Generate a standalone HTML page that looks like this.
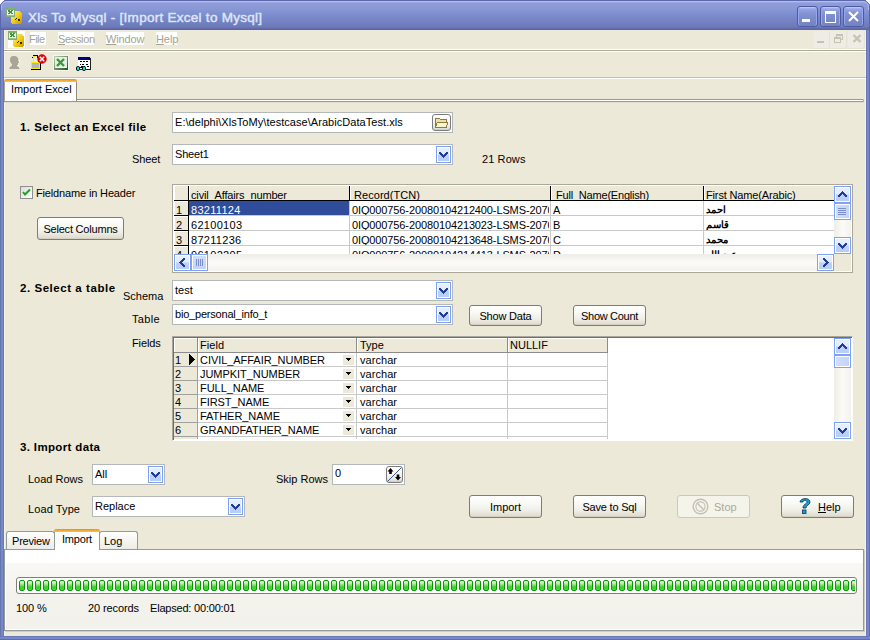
<!DOCTYPE html><html><head><meta charset="utf-8"><style>html,body{margin:0;padding:0;width:870px;height:640px;overflow:hidden;background:#fff;font-family:"Liberation Sans", sans-serif;}</style></head><body><div style="position:absolute;left:0px;top:0px;width:870px;height:640px;background:#6876B8;"></div>
<div style="position:absolute;left:0px;top:0px;width:870px;height:30px;background:linear-gradient(180deg,#5D68AC 0px,#5D68AC 1px,#BCC8F4 1px,#A4B2EA 2px,#8E9DD9 3px,#8A99D6 8px,#7F8ECE 14px,#7584C4 20px,#6D7AB8 27px,#6572B3 28px,#5A64A8 29px,#5A64A8 30px);"></div>
<svg style="position:absolute;left:0px;top:0px" width="10" height="10" viewBox="0 0 10 10" shape-rendering="crispEdges"><path d="M0 0 H7 A7 7 0 0 0 0 7 Z" fill="#fff"/><path d="M0.5 10 V7 A6.5 6.5 0 0 1 7 0.5 H10" fill="none" stroke="#5A66AA" stroke-width="1" shape-rendering="auto"/><path d="M1.5 10 V7 A5.5 5.5 0 0 1 7 1.5 H10" fill="none" stroke="#A9BCF2" stroke-width="1" shape-rendering="auto"/></svg>
<svg style="position:absolute;left:860px;top:0px" width="10" height="10" viewBox="0 0 10 10" shape-rendering="crispEdges"><path d="M10 0 H3 A7 7 0 0 1 10 7 Z" fill="#fff"/><path d="M9.5 10 V7 A6.5 6.5 0 0 0 3 0.5 H0" fill="none" stroke="#5A66AA" stroke-width="1" shape-rendering="auto"/><path d="M8.5 10 V7 A5.5 5.5 0 0 0 3 1.5 H0" fill="none" stroke="#A9BCF2" stroke-width="1" shape-rendering="auto"/></svg>
<div style="position:absolute;left:0px;top:6px;width:1px;height:24px;background:#5A66AA;"></div>
<div style="position:absolute;left:869px;top:6px;width:1px;height:24px;background:#5A66AA;"></div>
<div style="position:absolute;left:0px;top:30px;width:4px;height:610px;background:linear-gradient(90deg,#6575B2 0px,#6575B2 1px,#7888C7 1px,#7888C7 3px,#6878BA 3px);"></div>
<div style="position:absolute;left:866px;top:30px;width:4px;height:610px;background:linear-gradient(90deg,#6878BA 0px,#6878BA 1px,#7888C7 1px,#7888C7 3px,#5F6DAE 3px);"></div>
<div style="position:absolute;left:0px;top:636px;width:870px;height:4px;background:linear-gradient(180deg,#6878BA 0px,#6878BA 1px,#7888C7 1px,#7888C7 3px,#5F6DAE 3px);"></div>
<div style="position:absolute;left:4px;top:30px;width:862px;height:606px;background:#ECE9D8;"></div>
<div style="position:absolute;left:4px;top:30px;width:1px;height:606px;background:#F6F3E3;"></div>
<div style="position:absolute;left:865px;top:30px;width:1px;height:606px;background:#F6F3E3;"></div>
<svg style="position:absolute;left:6px;top:8px" width="18" height="18" viewBox="0 0 18 18" shape-rendering="crispEdges"><defs><linearGradient id="cy6" x1="0" x2="1" y1="0" y2="1"><stop offset="0" stop-color="#FFF590"/><stop offset="0.45" stop-color="#F6D41C"/><stop offset="1" stop-color="#C89400"/></linearGradient></defs><rect x="5" y="3" width="11" height="13" rx="3.5" fill="url(#cy6)"/><path d="M9 12 l2 -2 M13 11 v2" stroke="#303010" stroke-width="1.2"/><rect x="0.5" y="0.5" width="8" height="8" fill="#EEF6EA" stroke="#84AC74"/><rect x="1" y="1" width="7" height="1" fill="#7CB46C"/><rect x="1" y="6.8" width="7" height="1.2" fill="#9CC48C"/><path d="M2.2 2.3 L6.8 6 M6.8 2.3 L2.2 6" stroke="#3A9A3A" stroke-width="1.5"/></svg>
<div style="position:absolute;left:28px;top:10px;font-size:13.5px;line-height:16px;font-weight:400;color:#DCE6FA;letter-spacing:0.27px;white-space:pre;-webkit-text-stroke:0.45px #DCE6FA;">Xls To Mysql - [Import Excel to Mysql]</div>
<div style="position:absolute;left:797px;top:6px;width:19px;height:19px;border:1px solid #4F5AA0;border-radius:3px;background:linear-gradient(180deg,#C4CFF6 0px,#94A5E8 2px,#8494D4 6px,#7A89C8 12px,#7383C2 19px);box-shadow:inset 1px 0 0 #93A8F0,inset -1px 0 0 #93A8F0;"><div style="position:absolute;left:4px;top:12px;width:8px;height:3px;background:#fff"></div></div>
<div style="position:absolute;left:820px;top:6px;width:19px;height:19px;border:1px solid #4F5AA0;border-radius:3px;background:linear-gradient(180deg,#C4CFF6 0px,#94A5E8 2px,#8494D4 6px,#7A89C8 12px,#7383C2 19px);box-shadow:inset 1px 0 0 #93A8F0,inset -1px 0 0 #93A8F0;"><div style="position:absolute;left:4px;top:4px;width:9px;height:8px;border:1px solid #fff;border-top-width:3px"></div></div>
<div style="position:absolute;left:843px;top:6px;width:19px;height:19px;border:1px solid #4F5AA0;border-radius:3px;background:linear-gradient(180deg,#C4CFF6 0px,#94A5E8 2px,#8494D4 6px,#7A89C8 12px,#7383C2 19px);box-shadow:inset 1px 0 0 #93A8F0,inset -1px 0 0 #93A8F0;"><svg style="position:absolute;left:4px;top:4px" width="11" height="11"><path d="M1 1 L10 10 M10 1 L1 10" stroke="#fff" stroke-width="2"/></svg></div>
<div style="position:absolute;left:8px;top:31px;width:17px;height:17px;background:#fff;"></div>
<svg style="position:absolute;left:8px;top:31px" width="18" height="18" viewBox="0 0 18 18" shape-rendering="crispEdges"><defs><linearGradient id="cy8" x1="0" x2="1" y1="0" y2="1"><stop offset="0" stop-color="#FFF590"/><stop offset="0.45" stop-color="#F6D41C"/><stop offset="1" stop-color="#C89400"/></linearGradient></defs><rect x="5" y="3" width="11" height="13" rx="3.5" fill="url(#cy8)"/><path d="M9 12 l2 -2 M13 11 v2" stroke="#303010" stroke-width="1.2"/><rect x="0.5" y="0.5" width="8" height="8" fill="#EEF6EA" stroke="#84AC74"/><rect x="1" y="1" width="7" height="1" fill="#7CB46C"/><rect x="1" y="6.8" width="7" height="1.2" fill="#9CC48C"/><path d="M2.2 2.3 L6.8 6 M6.8 2.3 L2.2 6" stroke="#3A9A3A" stroke-width="1.5"/></svg>
<div style="position:absolute;left:30px;top:32px;width:16px;height:13px;background:#fff;"></div>
<div style="position:absolute;left:29px;top:33px;font-size:11px;line-height:13px;font-weight:400;color:#A5A290;letter-spacing:-0.55px;white-space:pre;">File</div>
<div style="position:absolute;left:58px;top:32px;width:36px;height:13px;background:#fff;"></div>
<div style="position:absolute;left:58px;top:33px;font-size:11px;line-height:13px;font-weight:400;color:#A5A290;letter-spacing:-0.35px;white-space:pre;"><u style="text-underline-offset:1px">S</u>ession</div>
<div style="position:absolute;left:106px;top:32px;width:38px;height:13px;background:#fff;"></div>
<div style="position:absolute;left:106px;top:33px;font-size:11px;line-height:13px;font-weight:400;color:#A5A290;letter-spacing:-0.15px;white-space:pre;"><u style="text-underline-offset:1px">W</u>indow</div>
<div style="position:absolute;left:156px;top:32px;width:21px;height:13px;background:#fff;"></div>
<div style="position:absolute;left:156px;top:33px;font-size:11px;line-height:13px;font-weight:400;color:#A5A290;letter-spacing:-0.1px;white-space:pre;"><u style="text-underline-offset:1px">H</u>elp</div>
<div style="position:absolute;left:813px;top:31px;width:17px;height:18px;background:#EEECE4;border-radius:2px;box-shadow:inset -1px -1px 0 #E6E3D5;"></div>
<div style="position:absolute;left:830px;top:31px;width:17px;height:18px;background:#EEECE4;border-radius:2px;box-shadow:inset -1px -1px 0 #E6E3D5;"></div>
<div style="position:absolute;left:848px;top:31px;width:17px;height:18px;background:#EEECE4;border-radius:2px;box-shadow:inset -1px -1px 0 #E6E3D5;"></div>
<div style="position:absolute;left:817px;top:41px;width:7px;height:2px;background:#C5C2B2;"></div>
<div style="position:absolute;left:836px;top:34px;width:7px;height:6px;border:1px solid #C5C2B2;border-top-width:2px;box-sizing:border-box;"></div>
<div style="position:absolute;left:834px;top:37px;width:7px;height:6px;border:1px solid #C5C2B2;border-top-width:2px;box-sizing:border-box;background:#EEECE4;"></div>
<svg style="position:absolute;left:852px;top:34px" width="10" height="9" viewBox="0 0 10 9" shape-rendering="crispEdges"><path d="M1.5 1 L8.5 8 M8.5 1 L1.5 8" stroke="#C5C2B2" stroke-width="2.2" shape-rendering="auto"/></svg>
<div style="position:absolute;left:4px;top:49px;width:862px;height:1px;background:#fff;"></div>
<div style="position:absolute;left:4px;top:50px;width:862px;height:1px;background:#ACA899;"></div>
<div style="position:absolute;left:4px;top:51px;width:862px;height:1px;background:#fff;"></div>
<svg style="position:absolute;left:8px;top:55px" width="14" height="15" viewBox="0 0 14 15" shape-rendering="crispEdges"><path d="M5.5 1 C3 1 2 2.5 2 5 C2 7 3 8.5 4 9 L4 10.5 L1.5 12.5 L1.5 14 L11.5 14 L11 12.5 L9 11 L9 10 L10.5 10 L10.5 8.5 L11.5 7.5 L10.5 6 C11 3 9 1 5.5 1Z" fill="#A9A698" shape-rendering="auto"/><path d="M11 4.5 L11.5 7.5 L10.5 8.5 L10.5 10 L9.5 11" fill="none" stroke="#fff" stroke-width="0.9" shape-rendering="auto"/></svg>
<svg style="position:absolute;left:30px;top:54px" width="17" height="18" viewBox="0 0 17 18" shape-rendering="crispEdges"><path d="M3 9 V3.5 Q3 1.5 5 1.5 H6.5 Q8 1.5 8 3.5 V9" fill="none" stroke="#000" stroke-width="1"/><path d="M3.5 9 V3 Q4 2 5 2" fill="none" stroke="#F0F000" stroke-width="1.2"/><rect x="1" y="8" width="10" height="8" fill="#000"/><rect x="1" y="8" width="9" height="7" fill="#F4F000"/><rect x="2" y="9" width="7" height="5" fill="#B4B4BC"/><circle cx="12" cy="5" r="4.4" fill="#E8000A" stroke="#A00000" stroke-width="0.5" shape-rendering="auto"/><path d="M9.8 2.8 L14.2 7.2 M14.2 2.8 L9.8 7.2" stroke="#fff" stroke-width="1.5" shape-rendering="auto"/></svg>
<svg style="position:absolute;left:53px;top:55px" width="16" height="16" viewBox="0 0 16 16" shape-rendering="crispEdges"><defs><linearGradient id="xg" x1="0" y1="0" x2="1" y2="1"><stop offset="0" stop-color="#B8D4B0"/><stop offset="1" stop-color="#264E26"/></linearGradient></defs><rect x="0" y="0" width="16" height="16" fill="#F6F8F0"/><rect x="1" y="1" width="14" height="14" fill="url(#xg)"/><rect x="2" y="2" width="12" height="11" fill="#E4F0E0"/><path d="M4 4 L11 11 M11 4 L4 11" stroke="#3A9A3A" stroke-width="2.4" shape-rendering="auto"/><rect x="3" y="12" width="10" height="1" fill="#F4FFF4"/></svg>
<svg style="position:absolute;left:76px;top:56px" width="16" height="16" viewBox="0 0 16 16" shape-rendering="crispEdges"><rect x="3" y="2" width="12" height="12" fill="#202020"/><rect x="2" y="1" width="12" height="12" fill="#fff"/><rect x="2" y="1" width="12" height="3" fill="#000080"/><path d="M4 5.5 h2 M7 5.5 h2 M10 5.5 h2 M4 8 h1 M6 8 h2 M10 8 h2 M5 10 h2 M8 10 h1 M11 10 h2" stroke="#000" stroke-width="1"/><path d="M2 11 h5" stroke="#000" stroke-width="1"/><rect x="0.5" y="10.5" width="3" height="4" rx="1.3" fill="#00E8F8" stroke="#000" stroke-width="1" shape-rendering="auto"/><rect x="6.5" y="10.5" width="3" height="4" rx="1.3" fill="#00E8F8" stroke="#000" stroke-width="1" shape-rendering="auto"/></svg>
<div style="position:absolute;left:4px;top:77px;width:862px;height:1px;background:#C5C2B2;"></div>
<div style="position:absolute;left:4px;top:78px;width:862px;height:1px;background:#fff;"></div>
<div style="position:absolute;left:70px;top:99px;width:794px;height:3px;background:#fff;border:1px solid #9D9A89;border-left:none;box-sizing:border-box;border-radius:0 2px 2px 0;"></div>
<div style="position:absolute;left:4px;top:101px;width:70px;height:1px;background:#9D9A89;"></div>
<div style="position:absolute;left:5px;top:100px;width:70px;height:1px;background:#fff;"></div>
<div style="position:absolute;left:4px;top:102px;width:860px;height:1px;background:#E2DFCE;"></div>
<div style="position:absolute;left:4px;top:79px;width:73px;height:22px;background:#fff;border-left:1px solid #A7A48F;border-right:1px solid #8F8C7B;box-sizing:border-box;border-radius:3px 3px 0 0;"></div>
<div style="position:absolute;left:4px;top:79px;width:73px;height:3px;background:linear-gradient(180deg,#E68B2C,#FFC73C);border-radius:3px 3px 0 0;"></div>
<div style="position:absolute;left:11px;top:83px;font-size:11px;line-height:13px;font-weight:400;color:#000;letter-spacing:-0.05px;white-space:pre;">Import Excel</div>
<div style="position:absolute;left:20px;top:121px;font-size:11.5px;line-height:13px;font-weight:700;color:#000;letter-spacing:0.45px;white-space:pre;">1. Select an Excel file</div>
<div style="position:absolute;left:132px;top:153px;font-size:11px;line-height:13px;font-weight:400;color:#000;letter-spacing:-0.1px;white-space:pre;">Sheet</div>
<div style="position:absolute;left:172px;top:112px;width:281px;height:21px;background:#fff;border:1px solid #B5B8B8;box-sizing:border-box;"></div>
<div style="position:absolute;left:175px;top:116px;font-size:11px;line-height:13px;font-weight:400;color:#000;letter-spacing:0.05px;white-space:pre;">E:\delphi\XlsToMy\testcase\ArabicDataTest.xls</div>
<div style="position:absolute;left:432px;top:114px;width:19px;height:17px;border:1px solid #7C7C7C;border-radius:3px;box-sizing:border-box;background:linear-gradient(180deg,#FFFFFF 0%,#F9F9F5 35%,#EEEDE6 70%,#DCD8CB 100%);box-shadow:inset 0 -1px 0 #D6D0C2;"></div>
<svg style="position:absolute;left:434px;top:116px" width="15" height="13" viewBox="0 0 15 13" shape-rendering="crispEdges"><path d="M1.5 2.5 h4 l1 1 h6 v8 h-11z" fill="#EEE2A8" stroke="#8C7A40" stroke-width="1"/><path d="M1.5 11.5 l2 -5.5 h10.5 l-2 5.5z" fill="#FAF4D0" stroke="#8C7A40" stroke-width="1"/></svg>
<div style="position:absolute;left:172px;top:144px;width:281px;height:21px;background:#fff;border:1px solid #B5B8B8;box-sizing:border-box;"></div>
<div style="position:absolute;left:436px;top:146px;width:15px;height:17px;border:1px solid #7BA2F6;box-sizing:border-box;background:linear-gradient(180deg,#FFFFFF 0px,#FFFFFF 1px,#E9F0FD 1px,#E2EAFC 7px,#BDD0F9 8px,#BACDF8 14px,#FFFFFF 14px);box-shadow:inset 1px 0 0 #fff,inset -1px 0 0 #fff;"><svg style="position:absolute;left:2px;top:5px" width="9" height="6" shape-rendering="crispEdges"><rect x="0" y="0" width="2" height="1" fill="#1E3E9E"/><rect x="7" y="0" width="2" height="1" fill="#1E3E9E"/><rect x="0" y="1" width="3" height="1" fill="#1E3E9E"/><rect x="6" y="1" width="3" height="1" fill="#1E3E9E"/><rect x="1" y="2" width="3" height="1" fill="#1E3E9E"/><rect x="5" y="2" width="3" height="1" fill="#1E3E9E"/><rect x="2" y="3" width="5" height="1" fill="#1E3E9E"/><rect x="3" y="4" width="3" height="1" fill="#1E3E9E"/><rect x="4" y="5" width="1" height="1" fill="#1E3E9E"/></svg></div>
<div style="position:absolute;left:175px;top:148px;font-size:11px;line-height:13px;font-weight:400;color:#000;letter-spacing:-0.2px;white-space:pre;">Sheet1</div>
<div style="position:absolute;left:482px;top:153px;font-size:11px;line-height:13px;font-weight:400;color:#000;letter-spacing:0.1px;white-space:pre;">21 Rows</div>
<div style="position:absolute;left:20px;top:186px;width:13px;height:13px;background:linear-gradient(135deg,#DCDCD7,#fff);border:1px solid #8E8F8F;box-sizing:border-box;"></div>
<svg style="position:absolute;left:22px;top:188px" width="9" height="9" viewBox="0 0 9 9" shape-rendering="crispEdges"><path d="M1 4 L3 6.5 L8 1.5" fill="none" stroke="#21A121" stroke-width="2" shape-rendering="auto"/></svg>
<div style="position:absolute;left:36px;top:187px;font-size:11px;line-height:13px;font-weight:400;color:#000;letter-spacing:-0.15px;white-space:pre;">Fieldname in Header</div>
<div style="position:absolute;left:37px;top:217px;width:87px;height:23px;border:1px solid #7C7C7C;border-radius:3px;box-sizing:border-box;background:linear-gradient(180deg,#FFFFFF 0%,#F9F9F5 35%,#EEEDE6 70%,#DCD8CB 100%);box-shadow:inset 0 -1px 0 #D6D0C2;"></div>
<div style="position:absolute;left:37px;top:223px;width:87px;text-align:center;font-size:11px;line-height:13px;font-weight:400;color:#000;letter-spacing:-0.2px;white-space:pre;">Select Columns</div>
<div style="position:absolute;left:172px;top:184px;width:681px;height:89px;background:#fff;border:1px solid #ACA899;box-sizing:border-box;"></div>
<div style="position:absolute;left:174px;top:186px;width:660px;height:14px;background:#ECE9D8;"></div>
<div style="position:absolute;left:174px;top:200px;width:660px;height:1px;background:#000;"></div>
<div style="position:absolute;left:188px;top:186px;width:1px;height:15px;background:#000;"></div>
<div style="position:absolute;left:189px;top:186px;width:1px;height:14px;background:#fff;"></div>
<div style="position:absolute;left:349px;top:186px;width:1px;height:15px;background:#000;"></div>
<div style="position:absolute;left:350px;top:186px;width:1px;height:14px;background:#fff;"></div>
<div style="position:absolute;left:550px;top:186px;width:1px;height:15px;background:#000;"></div>
<div style="position:absolute;left:551px;top:186px;width:1px;height:14px;background:#fff;"></div>
<div style="position:absolute;left:703px;top:186px;width:1px;height:15px;background:#000;"></div>
<div style="position:absolute;left:704px;top:186px;width:1px;height:14px;background:#fff;"></div>
<div style="position:absolute;left:174px;top:186px;width:1px;height:14px;background:#fff;"></div>
<div style="position:absolute;left:188px;top:186px;width:1px;height:68px;background:#000;"></div>
<div style="position:absolute;left:191px;top:189px;font-size:11px;line-height:13px;font-weight:400;color:#000;letter-spacing:-0.15px;white-space:pre;">civil_Affairs_number</div>
<div style="position:absolute;left:354px;top:189px;font-size:11px;line-height:13px;font-weight:400;color:#000;letter-spacing:0.05px;white-space:pre;">Record(TCN)</div>
<div style="position:absolute;left:556px;top:189px;font-size:11px;line-height:13px;font-weight:400;color:#000;letter-spacing:-0.2px;white-space:pre;">Full_Name(English)</div>
<div style="position:absolute;left:706px;top:189px;font-size:11px;line-height:13px;font-weight:400;color:#000;letter-spacing:-0.15px;white-space:pre;">First Name(Arabic)</div>
<div style="position:absolute;left:174px;top:201px;width:14px;height:14px;background:#ECE9D8;box-shadow:inset 1px 1px 0 #fff;"></div>
<div style="position:absolute;left:174px;top:215px;width:14px;height:1px;background:#000;"></div>
<div style="position:absolute;left:189px;top:215px;width:645px;height:1px;background:#C9C9C9;"></div>
<div style="position:absolute;left:349px;top:201px;width:1px;height:15px;background:#C9C9C9;"></div>
<div style="position:absolute;left:550px;top:201px;width:1px;height:15px;background:#C9C9C9;"></div>
<div style="position:absolute;left:703px;top:201px;width:1px;height:15px;background:#C9C9C9;"></div>
<div style="position:absolute;left:189px;top:201px;width:160px;height:14px;background:#2F4D9A;"></div>
<div style="position:absolute;left:174px;top:216px;width:14px;height:14px;background:#ECE9D8;box-shadow:inset 1px 1px 0 #fff;"></div>
<div style="position:absolute;left:174px;top:230px;width:14px;height:1px;background:#000;"></div>
<div style="position:absolute;left:189px;top:230px;width:645px;height:1px;background:#C9C9C9;"></div>
<div style="position:absolute;left:349px;top:216px;width:1px;height:15px;background:#C9C9C9;"></div>
<div style="position:absolute;left:550px;top:216px;width:1px;height:15px;background:#C9C9C9;"></div>
<div style="position:absolute;left:703px;top:216px;width:1px;height:15px;background:#C9C9C9;"></div>
<div style="position:absolute;left:174px;top:231px;width:14px;height:14px;background:#ECE9D8;box-shadow:inset 1px 1px 0 #fff;"></div>
<div style="position:absolute;left:174px;top:245px;width:14px;height:1px;background:#000;"></div>
<div style="position:absolute;left:189px;top:245px;width:645px;height:1px;background:#C9C9C9;"></div>
<div style="position:absolute;left:349px;top:231px;width:1px;height:15px;background:#C9C9C9;"></div>
<div style="position:absolute;left:550px;top:231px;width:1px;height:15px;background:#C9C9C9;"></div>
<div style="position:absolute;left:703px;top:231px;width:1px;height:15px;background:#C9C9C9;"></div>
<div style="position:absolute;left:174px;top:246px;width:14px;height:14px;background:#ECE9D8;box-shadow:inset 1px 1px 0 #fff;"></div>
<div style="position:absolute;left:174px;top:260px;width:14px;height:1px;background:#000;"></div>
<div style="position:absolute;left:189px;top:260px;width:645px;height:1px;background:#C9C9C9;"></div>
<div style="position:absolute;left:349px;top:246px;width:1px;height:15px;background:#C9C9C9;"></div>
<div style="position:absolute;left:550px;top:246px;width:1px;height:15px;background:#C9C9C9;"></div>
<div style="position:absolute;left:703px;top:246px;width:1px;height:15px;background:#C9C9C9;"></div>
<div style="position:absolute;left:174px;top:201px;width:660px;height:53px;overflow:hidden;"><div style="position:absolute;left:0px;top:0px;width:14px;height:14px;overflow:hidden;"><div style="position:absolute;left:2px;top:3px;font-size:11px;line-height:13px;color:#000;letter-spacing:0px;white-space:pre;">1</div></div><div style="position:absolute;left:15px;top:0px;width:160px;height:14px;overflow:hidden;"><div style="position:absolute;left:2px;top:3px;font-size:11px;line-height:13px;color:#fff;letter-spacing:0.3px;white-space:pre;">83211124</div></div><div style="position:absolute;left:176px;top:0px;width:199px;height:14px;overflow:hidden;"><div style="position:absolute;left:2px;top:3px;font-size:11px;line-height:13px;color:#000;letter-spacing:-0.12px;white-space:pre;">0IQ000756-20080104212400-LSMS-2070</div></div><div style="position:absolute;left:377px;top:0px;width:152px;height:14px;overflow:hidden;"><div style="position:absolute;left:2px;top:3px;font-size:11px;line-height:13px;color:#000;letter-spacing:0px;white-space:pre;">A</div></div><div style="position:absolute;left:530px;top:0px;width:130px;height:14px;overflow:hidden;"><div style="position:absolute;left:2px;top:3px;font-size:10px;line-height:12px;color:#000;letter-spacing:0px;white-space:pre;font-weight:700;direction:rtl;unicode-bidi:bidi-override;">احمد</div></div><div style="position:absolute;left:0px;top:15px;width:14px;height:14px;overflow:hidden;"><div style="position:absolute;left:2px;top:3px;font-size:11px;line-height:13px;color:#000;letter-spacing:0px;white-space:pre;">2</div></div><div style="position:absolute;left:15px;top:15px;width:160px;height:14px;overflow:hidden;"><div style="position:absolute;left:2px;top:3px;font-size:11px;line-height:13px;color:#000;letter-spacing:0.3px;white-space:pre;">62100103</div></div><div style="position:absolute;left:176px;top:15px;width:199px;height:14px;overflow:hidden;"><div style="position:absolute;left:2px;top:3px;font-size:11px;line-height:13px;color:#000;letter-spacing:-0.12px;white-space:pre;">0IQ000756-20080104213023-LSMS-2070</div></div><div style="position:absolute;left:377px;top:15px;width:152px;height:14px;overflow:hidden;"><div style="position:absolute;left:2px;top:3px;font-size:11px;line-height:13px;color:#000;letter-spacing:0px;white-space:pre;">B</div></div><div style="position:absolute;left:530px;top:15px;width:130px;height:14px;overflow:hidden;"><div style="position:absolute;left:2px;top:3px;font-size:10px;line-height:12px;color:#000;letter-spacing:0px;white-space:pre;font-weight:700;direction:rtl;unicode-bidi:bidi-override;">قاسم</div></div><div style="position:absolute;left:0px;top:30px;width:14px;height:14px;overflow:hidden;"><div style="position:absolute;left:2px;top:3px;font-size:11px;line-height:13px;color:#000;letter-spacing:0px;white-space:pre;">3</div></div><div style="position:absolute;left:15px;top:30px;width:160px;height:14px;overflow:hidden;"><div style="position:absolute;left:2px;top:3px;font-size:11px;line-height:13px;color:#000;letter-spacing:0.3px;white-space:pre;">87211236</div></div><div style="position:absolute;left:176px;top:30px;width:199px;height:14px;overflow:hidden;"><div style="position:absolute;left:2px;top:3px;font-size:11px;line-height:13px;color:#000;letter-spacing:-0.12px;white-space:pre;">0IQ000756-20080104213648-LSMS-2070</div></div><div style="position:absolute;left:377px;top:30px;width:152px;height:14px;overflow:hidden;"><div style="position:absolute;left:2px;top:3px;font-size:11px;line-height:13px;color:#000;letter-spacing:0px;white-space:pre;">C</div></div><div style="position:absolute;left:530px;top:30px;width:130px;height:14px;overflow:hidden;"><div style="position:absolute;left:2px;top:3px;font-size:10px;line-height:12px;color:#000;letter-spacing:0px;white-space:pre;font-weight:700;direction:rtl;unicode-bidi:bidi-override;">محمد</div></div><div style="position:absolute;left:0px;top:45px;width:14px;height:14px;overflow:hidden;"><div style="position:absolute;left:2px;top:3px;font-size:11px;line-height:13px;color:#000;letter-spacing:0px;white-space:pre;">4</div></div><div style="position:absolute;left:15px;top:45px;width:160px;height:14px;overflow:hidden;"><div style="position:absolute;left:2px;top:3px;font-size:11px;line-height:13px;color:#000;letter-spacing:0.3px;white-space:pre;">96102205</div></div><div style="position:absolute;left:176px;top:45px;width:199px;height:14px;overflow:hidden;"><div style="position:absolute;left:2px;top:3px;font-size:11px;line-height:13px;color:#000;letter-spacing:-0.12px;white-space:pre;">0IQ000756-20080104214413-LSMS-2070</div></div><div style="position:absolute;left:377px;top:45px;width:152px;height:14px;overflow:hidden;"><div style="position:absolute;left:2px;top:3px;font-size:11px;line-height:13px;color:#000;letter-spacing:0px;white-space:pre;">D</div></div><div style="position:absolute;left:530px;top:45px;width:130px;height:14px;overflow:hidden;"><div style="position:absolute;left:2px;top:3px;font-size:10px;line-height:12px;color:#000;letter-spacing:0px;white-space:pre;font-weight:700;direction:rtl;unicode-bidi:bidi-override;">عبد الله</div></div></div>
<div style="position:absolute;left:834px;top:186px;width:17px;height:68px;background:linear-gradient(90deg,#EEEDE6,#FBFBF8 50%,#F3F2EC);"></div>
<div style="position:absolute;left:834px;top:186px;width:17px;height:17px;border:1px solid #7BA2F6;box-sizing:border-box;background:linear-gradient(180deg,#FFFFFF 0px,#FFFFFF 1px,#E9F0FD 1px,#E2EAFC 7px,#BDD0F9 8px,#BACDF8 14px,#FFFFFF 14px);box-shadow:inset 1px 0 0 #fff,inset -1px 0 0 #fff;"></div>
<svg style="position:absolute;left:838px;top:191px" width="9" height="6" viewBox="0 0 9 6" shape-rendering="crispEdges"><rect x="0" y="5" width="2" height="1" fill="#1E3E9E"/><rect x="7" y="5" width="2" height="1" fill="#1E3E9E"/><rect x="0" y="4" width="3" height="1" fill="#1E3E9E"/><rect x="6" y="4" width="3" height="1" fill="#1E3E9E"/><rect x="1" y="3" width="3" height="1" fill="#1E3E9E"/><rect x="5" y="3" width="3" height="1" fill="#1E3E9E"/><rect x="2" y="2" width="5" height="1" fill="#1E3E9E"/><rect x="3" y="1" width="3" height="1" fill="#1E3E9E"/><rect x="4" y="0" width="1" height="1" fill="#1E3E9E"/></svg>
<div style="position:absolute;left:834px;top:203px;width:17px;height:17px;border:1px solid #7BA2F6;box-sizing:border-box;background:linear-gradient(90deg,#D0DDFC,#C2D3FA);box-shadow:inset 1px 1px 0 #fff,inset -1px -1px 0 #fff;"></div>
<svg style="position:absolute;left:838px;top:208px" width="8" height="7" viewBox="0 0 8 7" shape-rendering="crispEdges"><path d="M0 0.5h8M0 2.5h8M0 4.5h8M0 6.5h8" stroke="#7C8FCC" stroke-width="1"/></svg>
<div style="position:absolute;left:834px;top:237px;width:17px;height:17px;border:1px solid #7BA2F6;box-sizing:border-box;background:linear-gradient(180deg,#FFFFFF 0px,#FFFFFF 1px,#E9F0FD 1px,#E2EAFC 7px,#BDD0F9 8px,#BACDF8 14px,#FFFFFF 14px);box-shadow:inset 1px 0 0 #fff,inset -1px 0 0 #fff;"></div>
<svg style="position:absolute;left:838px;top:243px" width="9" height="6" viewBox="0 0 9 6" shape-rendering="crispEdges"><rect x="0" y="0" width="2" height="1" fill="#1E3E9E"/><rect x="7" y="0" width="2" height="1" fill="#1E3E9E"/><rect x="0" y="1" width="3" height="1" fill="#1E3E9E"/><rect x="6" y="1" width="3" height="1" fill="#1E3E9E"/><rect x="1" y="2" width="3" height="1" fill="#1E3E9E"/><rect x="5" y="2" width="3" height="1" fill="#1E3E9E"/><rect x="2" y="3" width="5" height="1" fill="#1E3E9E"/><rect x="3" y="4" width="3" height="1" fill="#1E3E9E"/><rect x="4" y="5" width="1" height="1" fill="#1E3E9E"/></svg>
<div style="position:absolute;left:174px;top:254px;width:660px;height:17px;background:linear-gradient(180deg,#EEEDE6,#FBFBF8 50%,#F3F2EC);"></div>
<div style="position:absolute;left:174px;top:254px;width:17px;height:17px;border:1px solid #7BA2F6;box-sizing:border-box;background:linear-gradient(180deg,#FFFFFF 0px,#FFFFFF 1px,#E9F0FD 1px,#E2EAFC 7px,#BDD0F9 8px,#BACDF8 14px,#FFFFFF 14px);box-shadow:inset 1px 0 0 #fff,inset -1px 0 0 #fff;"></div>
<svg style="position:absolute;left:179px;top:258px" width="6" height="9" viewBox="0 0 6 9" shape-rendering="crispEdges"><rect x="5" y="0" width="1" height="2" fill="#1E3E9E"/><rect x="5" y="7" width="1" height="2" fill="#1E3E9E"/><rect x="4" y="0" width="1" height="3" fill="#1E3E9E"/><rect x="4" y="6" width="1" height="3" fill="#1E3E9E"/><rect x="3" y="1" width="1" height="3" fill="#1E3E9E"/><rect x="3" y="5" width="1" height="3" fill="#1E3E9E"/><rect x="2" y="2" width="1" height="5" fill="#1E3E9E"/><rect x="1" y="3" width="1" height="3" fill="#1E3E9E"/><rect x="0" y="4" width="1" height="1" fill="#1E3E9E"/></svg>
<div style="position:absolute;left:191px;top:254px;width:17px;height:17px;border:1px solid #7BA2F6;box-sizing:border-box;background:linear-gradient(180deg,#D0DDFC,#C2D3FA);box-shadow:inset 1px 1px 0 #fff,inset -1px -1px 0 #fff;"></div>
<svg style="position:absolute;left:196px;top:259px" width="8" height="7" viewBox="0 0 8 7" shape-rendering="crispEdges"><path d="M0.5 0v7M2.5 0v7M4.5 0v7M6.5 0v7" stroke="#7C8FCC" stroke-width="1"/></svg>
<div style="position:absolute;left:817px;top:254px;width:17px;height:17px;border:1px solid #7BA2F6;box-sizing:border-box;background:linear-gradient(180deg,#FFFFFF 0px,#FFFFFF 1px,#E9F0FD 1px,#E2EAFC 7px,#BDD0F9 8px,#BACDF8 14px,#FFFFFF 14px);box-shadow:inset 1px 0 0 #fff,inset -1px 0 0 #fff;"></div>
<svg style="position:absolute;left:823px;top:258px" width="6" height="9" viewBox="0 0 6 9" shape-rendering="crispEdges"><rect x="0" y="0" width="1" height="2" fill="#1E3E9E"/><rect x="0" y="7" width="1" height="2" fill="#1E3E9E"/><rect x="1" y="0" width="1" height="3" fill="#1E3E9E"/><rect x="1" y="6" width="1" height="3" fill="#1E3E9E"/><rect x="2" y="1" width="1" height="3" fill="#1E3E9E"/><rect x="2" y="5" width="1" height="3" fill="#1E3E9E"/><rect x="3" y="2" width="1" height="5" fill="#1E3E9E"/><rect x="4" y="3" width="1" height="3" fill="#1E3E9E"/><rect x="5" y="4" width="1" height="1" fill="#1E3E9E"/></svg>
<div style="position:absolute;left:834px;top:254px;width:17px;height:17px;background:#ECE9D8;"></div>
<div style="position:absolute;left:20px;top:282px;font-size:11.5px;line-height:13px;font-weight:700;color:#000;letter-spacing:0.55px;white-space:pre;">2. Select a table</div>
<div style="position:absolute;left:123px;top:290px;font-size:11px;line-height:13px;font-weight:400;color:#000;letter-spacing:0px;white-space:pre;">Schema</div>
<div style="position:absolute;left:132px;top:313px;font-size:11px;line-height:13px;font-weight:400;color:#000;letter-spacing:0.3px;white-space:pre;">Table</div>
<div style="position:absolute;left:132px;top:337px;font-size:11px;line-height:13px;font-weight:400;color:#000;letter-spacing:-0.1px;white-space:pre;">Fields</div>
<div style="position:absolute;left:172px;top:280px;width:281px;height:21px;background:#fff;border:1px solid #B5B8B8;box-sizing:border-box;"></div>
<div style="position:absolute;left:436px;top:282px;width:15px;height:17px;border:1px solid #7BA2F6;box-sizing:border-box;background:linear-gradient(180deg,#FFFFFF 0px,#FFFFFF 1px,#E9F0FD 1px,#E2EAFC 7px,#BDD0F9 8px,#BACDF8 14px,#FFFFFF 14px);box-shadow:inset 1px 0 0 #fff,inset -1px 0 0 #fff;"><svg style="position:absolute;left:2px;top:5px" width="9" height="6" shape-rendering="crispEdges"><rect x="0" y="0" width="2" height="1" fill="#1E3E9E"/><rect x="7" y="0" width="2" height="1" fill="#1E3E9E"/><rect x="0" y="1" width="3" height="1" fill="#1E3E9E"/><rect x="6" y="1" width="3" height="1" fill="#1E3E9E"/><rect x="1" y="2" width="3" height="1" fill="#1E3E9E"/><rect x="5" y="2" width="3" height="1" fill="#1E3E9E"/><rect x="2" y="3" width="5" height="1" fill="#1E3E9E"/><rect x="3" y="4" width="3" height="1" fill="#1E3E9E"/><rect x="4" y="5" width="1" height="1" fill="#1E3E9E"/></svg></div>
<div style="position:absolute;left:175px;top:284px;font-size:11px;line-height:13px;font-weight:400;color:#000;letter-spacing:0px;white-space:pre;">test</div>
<div style="position:absolute;left:172px;top:304px;width:281px;height:21px;background:#fff;border:1px solid #B5B8B8;box-sizing:border-box;"></div>
<div style="position:absolute;left:436px;top:306px;width:15px;height:17px;border:1px solid #7BA2F6;box-sizing:border-box;background:linear-gradient(180deg,#FFFFFF 0px,#FFFFFF 1px,#E9F0FD 1px,#E2EAFC 7px,#BDD0F9 8px,#BACDF8 14px,#FFFFFF 14px);box-shadow:inset 1px 0 0 #fff,inset -1px 0 0 #fff;"><svg style="position:absolute;left:2px;top:5px" width="9" height="6" shape-rendering="crispEdges"><rect x="0" y="0" width="2" height="1" fill="#1E3E9E"/><rect x="7" y="0" width="2" height="1" fill="#1E3E9E"/><rect x="0" y="1" width="3" height="1" fill="#1E3E9E"/><rect x="6" y="1" width="3" height="1" fill="#1E3E9E"/><rect x="1" y="2" width="3" height="1" fill="#1E3E9E"/><rect x="5" y="2" width="3" height="1" fill="#1E3E9E"/><rect x="2" y="3" width="5" height="1" fill="#1E3E9E"/><rect x="3" y="4" width="3" height="1" fill="#1E3E9E"/><rect x="4" y="5" width="1" height="1" fill="#1E3E9E"/></svg></div>
<div style="position:absolute;left:175px;top:308px;font-size:11px;line-height:13px;font-weight:400;color:#000;letter-spacing:-0.2px;white-space:pre;">bio_personal_info_t</div>
<div style="position:absolute;left:469px;top:305px;width:73px;height:21px;border:1px solid #7C7C7C;border-radius:3px;box-sizing:border-box;background:linear-gradient(180deg,#FFFFFF 0%,#F9F9F5 35%,#EEEDE6 70%,#DCD8CB 100%);box-shadow:inset 0 -1px 0 #D6D0C2;"></div>
<div style="position:absolute;left:469px;top:310px;width:73px;text-align:center;font-size:11px;line-height:13px;font-weight:400;color:#000;letter-spacing:-0.2px;white-space:pre;">Show Data</div>
<div style="position:absolute;left:573px;top:305px;width:73px;height:21px;border:1px solid #7C7C7C;border-radius:3px;box-sizing:border-box;background:linear-gradient(180deg,#FFFFFF 0%,#F9F9F5 35%,#EEEDE6 70%,#DCD8CB 100%);box-shadow:inset 0 -1px 0 #D6D0C2;"></div>
<div style="position:absolute;left:573px;top:310px;width:73px;text-align:center;font-size:11px;line-height:13px;font-weight:400;color:#000;letter-spacing:-0.3px;white-space:pre;">Show Count</div>
<div style="position:absolute;left:172px;top:336px;width:681px;height:105px;background:#fff;border-left:1px solid #ACA899;border-top:1px solid #ACA899;border-right:1px solid #fff;border-bottom:1px solid #fff;box-sizing:border-box;"></div>
<div style="position:absolute;left:173px;top:337px;width:679px;height:103px;border-left:1px solid #716F64;border-top:1px solid #716F64;box-sizing:border-box;"></div>
<div style="position:absolute;left:174px;top:338px;width:434px;height:15px;background:#ECE9D8;"></div>
<div style="position:absolute;left:174px;top:338px;width:434px;height:1px;background:#fff;"></div>
<div style="position:absolute;left:197px;top:338px;width:1px;height:15px;background:#8C8C8C;"></div>
<div style="position:absolute;left:198px;top:338px;width:1px;height:14px;background:#fff;"></div>
<div style="position:absolute;left:356px;top:338px;width:1px;height:15px;background:#8C8C8C;"></div>
<div style="position:absolute;left:357px;top:338px;width:1px;height:14px;background:#fff;"></div>
<div style="position:absolute;left:507px;top:338px;width:1px;height:15px;background:#8C8C8C;"></div>
<div style="position:absolute;left:508px;top:338px;width:1px;height:14px;background:#fff;"></div>
<div style="position:absolute;left:607px;top:338px;width:1px;height:15px;background:#8C8C8C;"></div>
<div style="position:absolute;left:608px;top:338px;width:1px;height:14px;background:#fff;"></div>
<div style="position:absolute;left:174px;top:338px;width:1px;height:14px;background:#fff;"></div>
<div style="position:absolute;left:174px;top:352px;width:434px;height:1px;background:#8C8C8C;"></div>
<div style="position:absolute;left:200px;top:339px;font-size:11px;line-height:13px;font-weight:400;color:#000;letter-spacing:0.1px;white-space:pre;">Field</div>
<div style="position:absolute;left:360px;top:339px;font-size:11px;line-height:13px;font-weight:400;color:#000;letter-spacing:0px;white-space:pre;">Type</div>
<div style="position:absolute;left:510px;top:339px;font-size:11px;line-height:13px;font-weight:400;color:#000;letter-spacing:0px;white-space:pre;">NULLIF</div>
<div style="position:absolute;left:174px;top:353px;width:660px;height:86px;overflow:hidden;"><div style="position:absolute;left:0px;top:0px;width:23px;height:13px;background:#ECE9D8;"></div><div style="position:absolute;left:0px;top:13px;width:434px;height:1px;background:#C9C9C9;"></div><div style="position:absolute;left:0px;top:13px;width:23px;height:1px;background:#A0A0A0;"></div><div style="position:absolute;left:23px;top:0px;width:1px;height:14px;background:#A0A0A0;"></div><div style="position:absolute;left:182px;top:0px;width:1px;height:14px;background:#C9C9C9;"></div><div style="position:absolute;left:333px;top:0px;width:1px;height:14px;background:#C9C9C9;"></div><div style="position:absolute;left:433px;top:0px;width:1px;height:14px;background:#C9C9C9;"></div><div style="position:absolute;left:1px;top:0px;width:22px;height:13px;overflow:hidden;"><div style="position:absolute;left:0px;top:1px;font-size:11px;line-height:13px;color:#000;letter-spacing:0px;white-space:pre;line-height:13px;">1</div></div><div style="position:absolute;left:24px;top:0px;width:140px;height:13px;overflow:hidden;"><div style="position:absolute;left:2px;top:1px;font-size:11px;line-height:13px;color:#000;letter-spacing:-0.05px;white-space:pre;">CIVIL_AFFAIR_NUMBER</div></div><div style="position:absolute;left:169px;top:2px;width:11px;height:10px;background:#ECE9D8;"></div><svg style="position:absolute;left:172px;top:5px" width="5" height="3" shape-rendering="crispEdges"><path d="M0 0h5v1h-1v1h-1v1h-1v-1h-1v-1h-1z" fill="#000"/></svg><div style="position:absolute;left:183px;top:0px;width:150px;height:13px;overflow:hidden;"><div style="position:absolute;left:3px;top:1px;font-size:11px;line-height:13px;color:#000;letter-spacing:0.05px;white-space:pre;">varchar</div></div><div style="position:absolute;left:0px;top:14px;width:23px;height:13px;background:#ECE9D8;"></div><div style="position:absolute;left:0px;top:27px;width:434px;height:1px;background:#C9C9C9;"></div><div style="position:absolute;left:0px;top:27px;width:23px;height:1px;background:#A0A0A0;"></div><div style="position:absolute;left:23px;top:14px;width:1px;height:14px;background:#A0A0A0;"></div><div style="position:absolute;left:182px;top:14px;width:1px;height:14px;background:#C9C9C9;"></div><div style="position:absolute;left:333px;top:14px;width:1px;height:14px;background:#C9C9C9;"></div><div style="position:absolute;left:433px;top:14px;width:1px;height:14px;background:#C9C9C9;"></div><div style="position:absolute;left:1px;top:14px;width:22px;height:13px;overflow:hidden;"><div style="position:absolute;left:0px;top:1px;font-size:11px;line-height:13px;color:#000;letter-spacing:0px;white-space:pre;line-height:13px;">2</div></div><div style="position:absolute;left:24px;top:14px;width:140px;height:13px;overflow:hidden;"><div style="position:absolute;left:2px;top:1px;font-size:11px;line-height:13px;color:#000;letter-spacing:-0.05px;white-space:pre;">JUMPKIT_NUMBER</div></div><div style="position:absolute;left:169px;top:16px;width:11px;height:10px;background:#ECE9D8;"></div><svg style="position:absolute;left:172px;top:19px" width="5" height="3" shape-rendering="crispEdges"><path d="M0 0h5v1h-1v1h-1v1h-1v-1h-1v-1h-1z" fill="#000"/></svg><div style="position:absolute;left:183px;top:14px;width:150px;height:13px;overflow:hidden;"><div style="position:absolute;left:3px;top:1px;font-size:11px;line-height:13px;color:#000;letter-spacing:0.05px;white-space:pre;">varchar</div></div><div style="position:absolute;left:0px;top:28px;width:23px;height:13px;background:#ECE9D8;"></div><div style="position:absolute;left:0px;top:41px;width:434px;height:1px;background:#C9C9C9;"></div><div style="position:absolute;left:0px;top:41px;width:23px;height:1px;background:#A0A0A0;"></div><div style="position:absolute;left:23px;top:28px;width:1px;height:14px;background:#A0A0A0;"></div><div style="position:absolute;left:182px;top:28px;width:1px;height:14px;background:#C9C9C9;"></div><div style="position:absolute;left:333px;top:28px;width:1px;height:14px;background:#C9C9C9;"></div><div style="position:absolute;left:433px;top:28px;width:1px;height:14px;background:#C9C9C9;"></div><div style="position:absolute;left:1px;top:28px;width:22px;height:13px;overflow:hidden;"><div style="position:absolute;left:0px;top:1px;font-size:11px;line-height:13px;color:#000;letter-spacing:0px;white-space:pre;line-height:13px;">3</div></div><div style="position:absolute;left:24px;top:28px;width:140px;height:13px;overflow:hidden;"><div style="position:absolute;left:2px;top:1px;font-size:11px;line-height:13px;color:#000;letter-spacing:-0.05px;white-space:pre;">FULL_NAME</div></div><div style="position:absolute;left:169px;top:30px;width:11px;height:10px;background:#ECE9D8;"></div><svg style="position:absolute;left:172px;top:33px" width="5" height="3" shape-rendering="crispEdges"><path d="M0 0h5v1h-1v1h-1v1h-1v-1h-1v-1h-1z" fill="#000"/></svg><div style="position:absolute;left:183px;top:28px;width:150px;height:13px;overflow:hidden;"><div style="position:absolute;left:3px;top:1px;font-size:11px;line-height:13px;color:#000;letter-spacing:0.05px;white-space:pre;">varchar</div></div><div style="position:absolute;left:0px;top:42px;width:23px;height:13px;background:#ECE9D8;"></div><div style="position:absolute;left:0px;top:55px;width:434px;height:1px;background:#C9C9C9;"></div><div style="position:absolute;left:0px;top:55px;width:23px;height:1px;background:#A0A0A0;"></div><div style="position:absolute;left:23px;top:42px;width:1px;height:14px;background:#A0A0A0;"></div><div style="position:absolute;left:182px;top:42px;width:1px;height:14px;background:#C9C9C9;"></div><div style="position:absolute;left:333px;top:42px;width:1px;height:14px;background:#C9C9C9;"></div><div style="position:absolute;left:433px;top:42px;width:1px;height:14px;background:#C9C9C9;"></div><div style="position:absolute;left:1px;top:42px;width:22px;height:13px;overflow:hidden;"><div style="position:absolute;left:0px;top:1px;font-size:11px;line-height:13px;color:#000;letter-spacing:0px;white-space:pre;line-height:13px;">4</div></div><div style="position:absolute;left:24px;top:42px;width:140px;height:13px;overflow:hidden;"><div style="position:absolute;left:2px;top:1px;font-size:11px;line-height:13px;color:#000;letter-spacing:-0.05px;white-space:pre;">FIRST_NAME</div></div><div style="position:absolute;left:169px;top:44px;width:11px;height:10px;background:#ECE9D8;"></div><svg style="position:absolute;left:172px;top:47px" width="5" height="3" shape-rendering="crispEdges"><path d="M0 0h5v1h-1v1h-1v1h-1v-1h-1v-1h-1z" fill="#000"/></svg><div style="position:absolute;left:183px;top:42px;width:150px;height:13px;overflow:hidden;"><div style="position:absolute;left:3px;top:1px;font-size:11px;line-height:13px;color:#000;letter-spacing:0.05px;white-space:pre;">varchar</div></div><div style="position:absolute;left:0px;top:56px;width:23px;height:13px;background:#ECE9D8;"></div><div style="position:absolute;left:0px;top:69px;width:434px;height:1px;background:#C9C9C9;"></div><div style="position:absolute;left:0px;top:69px;width:23px;height:1px;background:#A0A0A0;"></div><div style="position:absolute;left:23px;top:56px;width:1px;height:14px;background:#A0A0A0;"></div><div style="position:absolute;left:182px;top:56px;width:1px;height:14px;background:#C9C9C9;"></div><div style="position:absolute;left:333px;top:56px;width:1px;height:14px;background:#C9C9C9;"></div><div style="position:absolute;left:433px;top:56px;width:1px;height:14px;background:#C9C9C9;"></div><div style="position:absolute;left:1px;top:56px;width:22px;height:13px;overflow:hidden;"><div style="position:absolute;left:0px;top:1px;font-size:11px;line-height:13px;color:#000;letter-spacing:0px;white-space:pre;line-height:13px;">5</div></div><div style="position:absolute;left:24px;top:56px;width:140px;height:13px;overflow:hidden;"><div style="position:absolute;left:2px;top:1px;font-size:11px;line-height:13px;color:#000;letter-spacing:-0.05px;white-space:pre;">FATHER_NAME</div></div><div style="position:absolute;left:169px;top:58px;width:11px;height:10px;background:#ECE9D8;"></div><svg style="position:absolute;left:172px;top:61px" width="5" height="3" shape-rendering="crispEdges"><path d="M0 0h5v1h-1v1h-1v1h-1v-1h-1v-1h-1z" fill="#000"/></svg><div style="position:absolute;left:183px;top:56px;width:150px;height:13px;overflow:hidden;"><div style="position:absolute;left:3px;top:1px;font-size:11px;line-height:13px;color:#000;letter-spacing:0.05px;white-space:pre;">varchar</div></div><div style="position:absolute;left:0px;top:70px;width:23px;height:13px;background:#ECE9D8;"></div><div style="position:absolute;left:0px;top:83px;width:434px;height:1px;background:#C9C9C9;"></div><div style="position:absolute;left:0px;top:83px;width:23px;height:1px;background:#A0A0A0;"></div><div style="position:absolute;left:23px;top:70px;width:1px;height:14px;background:#A0A0A0;"></div><div style="position:absolute;left:182px;top:70px;width:1px;height:14px;background:#C9C9C9;"></div><div style="position:absolute;left:333px;top:70px;width:1px;height:14px;background:#C9C9C9;"></div><div style="position:absolute;left:433px;top:70px;width:1px;height:14px;background:#C9C9C9;"></div><div style="position:absolute;left:1px;top:70px;width:22px;height:13px;overflow:hidden;"><div style="position:absolute;left:0px;top:1px;font-size:11px;line-height:13px;color:#000;letter-spacing:0px;white-space:pre;line-height:13px;">6</div></div><div style="position:absolute;left:24px;top:70px;width:140px;height:13px;overflow:hidden;"><div style="position:absolute;left:2px;top:1px;font-size:11px;line-height:13px;color:#000;letter-spacing:-0.05px;white-space:pre;">GRANDFATHER_NAME</div></div><div style="position:absolute;left:169px;top:72px;width:11px;height:10px;background:#ECE9D8;"></div><svg style="position:absolute;left:172px;top:75px" width="5" height="3" shape-rendering="crispEdges"><path d="M0 0h5v1h-1v1h-1v1h-1v-1h-1v-1h-1z" fill="#000"/></svg><div style="position:absolute;left:183px;top:70px;width:150px;height:13px;overflow:hidden;"><div style="position:absolute;left:3px;top:1px;font-size:11px;line-height:13px;color:#000;letter-spacing:0.05px;white-space:pre;">varchar</div></div><div style="position:absolute;left:0px;top:84px;width:23px;height:13px;background:#ECE9D8;"></div><div style="position:absolute;left:0px;top:97px;width:434px;height:1px;background:#C9C9C9;"></div><div style="position:absolute;left:0px;top:97px;width:23px;height:1px;background:#A0A0A0;"></div><div style="position:absolute;left:23px;top:84px;width:1px;height:14px;background:#A0A0A0;"></div><div style="position:absolute;left:182px;top:84px;width:1px;height:14px;background:#C9C9C9;"></div><div style="position:absolute;left:333px;top:84px;width:1px;height:14px;background:#C9C9C9;"></div><div style="position:absolute;left:433px;top:84px;width:1px;height:14px;background:#C9C9C9;"></div><div style="position:absolute;left:1px;top:84px;width:22px;height:13px;overflow:hidden;"><div style="position:absolute;left:0px;top:1px;font-size:11px;line-height:13px;color:#000;letter-spacing:0px;white-space:pre;line-height:13px;">7</div></div><div style="position:absolute;left:24px;top:84px;width:140px;height:13px;overflow:hidden;"><div style="position:absolute;left:2px;top:1px;font-size:11px;line-height:13px;color:#000;letter-spacing:-0.05px;white-space:pre;">MOTHER_NAME</div></div><div style="position:absolute;left:169px;top:86px;width:11px;height:10px;background:#ECE9D8;"></div><svg style="position:absolute;left:172px;top:89px" width="5" height="3" shape-rendering="crispEdges"><path d="M0 0h5v1h-1v1h-1v1h-1v-1h-1v-1h-1z" fill="#000"/></svg><div style="position:absolute;left:183px;top:84px;width:150px;height:13px;overflow:hidden;"><div style="position:absolute;left:3px;top:1px;font-size:11px;line-height:13px;color:#000;letter-spacing:0.05px;white-space:pre;">varchar</div></div><svg style="position:absolute;left:15px;top:1px" width="6" height="11" shape-rendering="crispEdges"><path d="M0 0h1v1h1v1h1v1h1v1h1v1h1v1h-1v1h-1v1h-1v1h-1v1h-1v1h-1z" fill="#000"/></svg></div>
<div style="position:absolute;left:834px;top:338px;width:17px;height:101px;background:linear-gradient(90deg,#EEEDE6,#FBFBF8 50%,#F3F2EC);"></div>
<div style="position:absolute;left:834px;top:338px;width:17px;height:17px;border:1px solid #7BA2F6;box-sizing:border-box;background:linear-gradient(180deg,#FFFFFF 0px,#FFFFFF 1px,#E9F0FD 1px,#E2EAFC 7px,#BDD0F9 8px,#BACDF8 14px,#FFFFFF 14px);box-shadow:inset 1px 0 0 #fff,inset -1px 0 0 #fff;"></div>
<svg style="position:absolute;left:838px;top:343px" width="9" height="6" viewBox="0 0 9 6" shape-rendering="crispEdges"><rect x="0" y="5" width="2" height="1" fill="#1E3E9E"/><rect x="7" y="5" width="2" height="1" fill="#1E3E9E"/><rect x="0" y="4" width="3" height="1" fill="#1E3E9E"/><rect x="6" y="4" width="3" height="1" fill="#1E3E9E"/><rect x="1" y="3" width="3" height="1" fill="#1E3E9E"/><rect x="5" y="3" width="3" height="1" fill="#1E3E9E"/><rect x="2" y="2" width="5" height="1" fill="#1E3E9E"/><rect x="3" y="1" width="3" height="1" fill="#1E3E9E"/><rect x="4" y="0" width="1" height="1" fill="#1E3E9E"/></svg>
<div style="position:absolute;left:834px;top:355px;width:17px;height:13px;border:1px solid #7BA2F6;box-sizing:border-box;background:linear-gradient(90deg,#D0DDFC,#C2D3FA);box-shadow:inset 1px 1px 0 #fff,inset -1px -1px 0 #fff;"></div>
<div style="position:absolute;left:834px;top:422px;width:17px;height:17px;border:1px solid #7BA2F6;box-sizing:border-box;background:linear-gradient(180deg,#FFFFFF 0px,#FFFFFF 1px,#E9F0FD 1px,#E2EAFC 7px,#BDD0F9 8px,#BACDF8 14px,#FFFFFF 14px);box-shadow:inset 1px 0 0 #fff,inset -1px 0 0 #fff;"></div>
<svg style="position:absolute;left:838px;top:428px" width="9" height="6" viewBox="0 0 9 6" shape-rendering="crispEdges"><rect x="0" y="0" width="2" height="1" fill="#1E3E9E"/><rect x="7" y="0" width="2" height="1" fill="#1E3E9E"/><rect x="0" y="1" width="3" height="1" fill="#1E3E9E"/><rect x="6" y="1" width="3" height="1" fill="#1E3E9E"/><rect x="1" y="2" width="3" height="1" fill="#1E3E9E"/><rect x="5" y="2" width="3" height="1" fill="#1E3E9E"/><rect x="2" y="3" width="5" height="1" fill="#1E3E9E"/><rect x="3" y="4" width="3" height="1" fill="#1E3E9E"/><rect x="4" y="5" width="1" height="1" fill="#1E3E9E"/></svg>
<div style="position:absolute;left:20px;top:441px;font-size:11.5px;line-height:13px;font-weight:700;color:#000;letter-spacing:0.35px;white-space:pre;">3. Import data</div>
<div style="position:absolute;left:28px;top:473px;font-size:11px;line-height:13px;font-weight:400;color:#000;letter-spacing:0px;white-space:pre;">Load Rows</div>
<div style="position:absolute;left:28px;top:503px;font-size:11px;line-height:13px;font-weight:400;color:#000;letter-spacing:0.1px;white-space:pre;">Load Type</div>
<div style="position:absolute;left:92px;top:464px;width:73px;height:21px;background:#fff;border:1px solid #B5B8B8;box-sizing:border-box;"></div>
<div style="position:absolute;left:148px;top:466px;width:15px;height:17px;border:1px solid #7BA2F6;box-sizing:border-box;background:linear-gradient(180deg,#FFFFFF 0px,#FFFFFF 1px,#E9F0FD 1px,#E2EAFC 7px,#BDD0F9 8px,#BACDF8 14px,#FFFFFF 14px);box-shadow:inset 1px 0 0 #fff,inset -1px 0 0 #fff;"><svg style="position:absolute;left:2px;top:5px" width="9" height="6" shape-rendering="crispEdges"><rect x="0" y="0" width="2" height="1" fill="#1E3E9E"/><rect x="7" y="0" width="2" height="1" fill="#1E3E9E"/><rect x="0" y="1" width="3" height="1" fill="#1E3E9E"/><rect x="6" y="1" width="3" height="1" fill="#1E3E9E"/><rect x="1" y="2" width="3" height="1" fill="#1E3E9E"/><rect x="5" y="2" width="3" height="1" fill="#1E3E9E"/><rect x="2" y="3" width="5" height="1" fill="#1E3E9E"/><rect x="3" y="4" width="3" height="1" fill="#1E3E9E"/><rect x="4" y="5" width="1" height="1" fill="#1E3E9E"/></svg></div>
<div style="position:absolute;left:95px;top:468px;font-size:11px;line-height:13px;font-weight:400;color:#000;letter-spacing:0px;white-space:pre;">All</div>
<div style="position:absolute;left:92px;top:496px;width:153px;height:21px;background:#fff;border:1px solid #B5B8B8;box-sizing:border-box;"></div>
<div style="position:absolute;left:228px;top:498px;width:15px;height:17px;border:1px solid #7BA2F6;box-sizing:border-box;background:linear-gradient(180deg,#FFFFFF 0px,#FFFFFF 1px,#E9F0FD 1px,#E2EAFC 7px,#BDD0F9 8px,#BACDF8 14px,#FFFFFF 14px);box-shadow:inset 1px 0 0 #fff,inset -1px 0 0 #fff;"><svg style="position:absolute;left:2px;top:5px" width="9" height="6" shape-rendering="crispEdges"><rect x="0" y="0" width="2" height="1" fill="#1E3E9E"/><rect x="7" y="0" width="2" height="1" fill="#1E3E9E"/><rect x="0" y="1" width="3" height="1" fill="#1E3E9E"/><rect x="6" y="1" width="3" height="1" fill="#1E3E9E"/><rect x="1" y="2" width="3" height="1" fill="#1E3E9E"/><rect x="5" y="2" width="3" height="1" fill="#1E3E9E"/><rect x="2" y="3" width="5" height="1" fill="#1E3E9E"/><rect x="3" y="4" width="3" height="1" fill="#1E3E9E"/><rect x="4" y="5" width="1" height="1" fill="#1E3E9E"/></svg></div>
<div style="position:absolute;left:95px;top:500px;font-size:11px;line-height:13px;font-weight:400;color:#000;letter-spacing:0px;white-space:pre;">Replace</div>
<div style="position:absolute;left:276px;top:473px;font-size:11px;line-height:13px;font-weight:400;color:#000;letter-spacing:0px;white-space:pre;">Skip Rows</div>
<div style="position:absolute;left:332px;top:464px;width:73px;height:21px;background:#fff;border:1px solid #B5B8B8;box-sizing:border-box;"></div>
<div style="position:absolute;left:335px;top:467px;font-size:11px;line-height:13px;font-weight:400;color:#000;letter-spacing:0px;white-space:pre;">0</div>
<div style="position:absolute;left:386px;top:466px;width:17px;height:17px;border:1px solid #7C7C7C;border-radius:3px;box-sizing:border-box;background:linear-gradient(180deg,#FFFFFF 0%,#F9F9F5 35%,#EEEDE6 70%,#DCD8CB 100%);box-shadow:inset 0 -1px 0 #D6D0C2;"></div>
<svg style="position:absolute;left:387px;top:467px" width="15" height="15" viewBox="0 0 15 15" shape-rendering="crispEdges"><path d="M0.5 14.5 L14.5 0.5" stroke="#3A5AA0" stroke-width="1" shape-rendering="auto"/><path d="M3.5 1 L6.5 4.5 H4.8 V7 H2.2 V4.5 H0.5Z" fill="#000" shape-rendering="auto"/><path d="M11 13.5 L14 10 H12.3 V7.5 H9.7 V10 H8Z" fill="#000" shape-rendering="auto"/></svg>
<div style="position:absolute;left:469px;top:495px;width:73px;height:23px;border:1px solid #7C7C7C;border-radius:3px;box-sizing:border-box;background:linear-gradient(180deg,#FFFFFF 0%,#F9F9F5 35%,#EEEDE6 70%,#DCD8CB 100%);box-shadow:inset 0 -1px 0 #D6D0C2;"></div>
<div style="position:absolute;left:469px;top:501px;width:73px;text-align:center;font-size:11px;line-height:13px;font-weight:400;color:#000;letter-spacing:0px;white-space:pre;">Import</div>
<div style="position:absolute;left:573px;top:495px;width:73px;height:23px;border:1px solid #7C7C7C;border-radius:3px;box-sizing:border-box;background:linear-gradient(180deg,#FFFFFF 0%,#F9F9F5 35%,#EEEDE6 70%,#DCD8CB 100%);box-shadow:inset 0 -1px 0 #D6D0C2;"></div>
<div style="position:absolute;left:573px;top:501px;width:73px;text-align:center;font-size:11px;line-height:13px;font-weight:400;color:#000;letter-spacing:-0.2px;white-space:pre;">Save to Sql</div>
<div style="position:absolute;left:677px;top:495px;width:73px;height:23px;border:1px solid #CAC8BB;border-radius:3px;box-sizing:border-box;background:#F5F4EA;"></div>
<svg style="position:absolute;left:692px;top:498px" width="17" height="17" viewBox="0 0 17 17" shape-rendering="crispEdges"><circle cx="8.5" cy="8.5" r="7.3" fill="none" stroke="#C2C0B2" stroke-width="1.4" shape-rendering="auto"/><circle cx="8.5" cy="8.5" r="4.6" fill="none" stroke="#C2C0B2" stroke-width="1.1" shape-rendering="auto"/><path d="M5 5 L12 12" stroke="#C2C0B2" stroke-width="1.4" shape-rendering="auto"/></svg>
<div style="position:absolute;left:714px;top:501px;font-size:11px;line-height:13px;font-weight:400;color:#ACA899;letter-spacing:0px;white-space:pre;">Stop</div>
<div style="position:absolute;left:781px;top:495px;width:73px;height:23px;border:1px solid #7C7C7C;border-radius:3px;box-sizing:border-box;background:linear-gradient(180deg,#FFFFFF 0%,#F9F9F5 35%,#EEEDE6 70%,#DCD8CB 100%);box-shadow:inset 0 -1px 0 #D6D0C2;"></div>
<svg style="position:absolute;left:798px;top:497px" width="14" height="18" viewBox="0 0 14 18" shape-rendering="crispEdges"><path d="M2 5 C2 1 12 0 12 5 C12 8 8 8 8 11 L5 11 C5 7 9 7 9 5 C9 3 5 3 5 5Z" fill="#17A3C8" stroke="#0A3060" stroke-width="0.8" shape-rendering="auto"/><rect x="4.5" y="13" width="3.5" height="3.5" fill="#17A3C8" stroke="#0A3060" stroke-width="0.8" shape-rendering="auto"/></svg>
<div style="position:absolute;left:818px;top:501px;font-size:11px;line-height:13px;font-weight:400;color:#000;letter-spacing:0px;white-space:pre;"><u>H</u>elp</div>
<div style="position:absolute;left:4px;top:549px;width:860px;height:82px;background:linear-gradient(180deg,#FFFFFF 0px,#FFFFFF 13px,#F8F7F4 13px,#F6F5F1 30px,#F3F2ED 45px,#F2F1EC 82px);border:1px solid #919B9C;box-sizing:border-box;box-shadow:1px 1px 0 #D0CDBE;"></div>
<div style="position:absolute;left:5px;top:550px;width:858px;height:1px;background:#fff;"></div>
<div style="position:absolute;left:5px;top:550px;width:1px;height:80px;background:#fff;"></div>
<div style="position:absolute;left:5px;top:629px;width:858px;height:1px;background:#fff;"></div>
<div style="position:absolute;left:6px;top:531px;width:49px;height:18px;background:linear-gradient(180deg,#FFFFFF,#F6F5F0 50%,#ECEBE5);border:1px solid #919B9C;border-bottom:none;box-sizing:border-box;border-radius:3px 3px 0 0;"></div>
<div style="position:absolute;left:12px;top:535px;font-size:11px;line-height:13px;font-weight:400;color:#000;letter-spacing:-0.2px;white-space:pre;">Preview</div>
<div style="position:absolute;left:99px;top:531px;width:39px;height:18px;background:linear-gradient(180deg,#FFFFFF,#F6F5F0 50%,#ECEBE5);border:1px solid #919B9C;border-bottom:none;box-sizing:border-box;border-radius:3px 3px 0 0;"></div>
<div style="position:absolute;left:104px;top:535px;font-size:11px;line-height:13px;font-weight:400;color:#000;letter-spacing:0px;white-space:pre;">Log</div>
<div style="position:absolute;left:54px;top:529px;width:46px;height:21px;background:#fff;border-left:1px solid #919B9C;border-right:1px solid #919B9C;box-sizing:border-box;border-radius:3px 3px 0 0;"></div>
<div style="position:absolute;left:54px;top:529px;width:46px;height:3px;background:linear-gradient(180deg,#E68B2C,#FFC83C);border-radius:3px 3px 0 0;"></div>
<div style="position:absolute;left:62px;top:533px;font-size:11px;line-height:13px;font-weight:400;color:#000;letter-spacing:-0.2px;white-space:pre;">Import</div>
<div style="position:absolute;left:16px;top:577px;width:841px;height:17px;border:1px solid #7D7D7D;border-radius:3px;box-sizing:border-box;background:#fff;"></div>
<div style="position:absolute;left:16px;top:577px;width:839px;height:17px;overflow:hidden;"><div style="position:absolute;left:3px;top:3px;width:6px;height:11px;border:1px solid #0A960A;border-radius:2px;box-sizing:border-box;background:linear-gradient(180deg,#F4FFD8 0%,#A8E890 35%,#48C838 65%,#20F020 100%);"></div><div style="position:absolute;left:11px;top:3px;width:6px;height:11px;border:1px solid #0A960A;border-radius:2px;box-sizing:border-box;background:linear-gradient(180deg,#F4FFD8 0%,#A8E890 35%,#48C838 65%,#20F020 100%);"></div><div style="position:absolute;left:19px;top:3px;width:6px;height:11px;border:1px solid #0A960A;border-radius:2px;box-sizing:border-box;background:linear-gradient(180deg,#F4FFD8 0%,#A8E890 35%,#48C838 65%,#20F020 100%);"></div><div style="position:absolute;left:27px;top:3px;width:6px;height:11px;border:1px solid #0A960A;border-radius:2px;box-sizing:border-box;background:linear-gradient(180deg,#F4FFD8 0%,#A8E890 35%,#48C838 65%,#20F020 100%);"></div><div style="position:absolute;left:35px;top:3px;width:6px;height:11px;border:1px solid #0A960A;border-radius:2px;box-sizing:border-box;background:linear-gradient(180deg,#F4FFD8 0%,#A8E890 35%,#48C838 65%,#20F020 100%);"></div><div style="position:absolute;left:43px;top:3px;width:6px;height:11px;border:1px solid #0A960A;border-radius:2px;box-sizing:border-box;background:linear-gradient(180deg,#F4FFD8 0%,#A8E890 35%,#48C838 65%,#20F020 100%);"></div><div style="position:absolute;left:51px;top:3px;width:6px;height:11px;border:1px solid #0A960A;border-radius:2px;box-sizing:border-box;background:linear-gradient(180deg,#F4FFD8 0%,#A8E890 35%,#48C838 65%,#20F020 100%);"></div><div style="position:absolute;left:59px;top:3px;width:6px;height:11px;border:1px solid #0A960A;border-radius:2px;box-sizing:border-box;background:linear-gradient(180deg,#F4FFD8 0%,#A8E890 35%,#48C838 65%,#20F020 100%);"></div><div style="position:absolute;left:67px;top:3px;width:6px;height:11px;border:1px solid #0A960A;border-radius:2px;box-sizing:border-box;background:linear-gradient(180deg,#F4FFD8 0%,#A8E890 35%,#48C838 65%,#20F020 100%);"></div><div style="position:absolute;left:75px;top:3px;width:6px;height:11px;border:1px solid #0A960A;border-radius:2px;box-sizing:border-box;background:linear-gradient(180deg,#F4FFD8 0%,#A8E890 35%,#48C838 65%,#20F020 100%);"></div><div style="position:absolute;left:83px;top:3px;width:6px;height:11px;border:1px solid #0A960A;border-radius:2px;box-sizing:border-box;background:linear-gradient(180deg,#F4FFD8 0%,#A8E890 35%,#48C838 65%,#20F020 100%);"></div><div style="position:absolute;left:91px;top:3px;width:6px;height:11px;border:1px solid #0A960A;border-radius:2px;box-sizing:border-box;background:linear-gradient(180deg,#F4FFD8 0%,#A8E890 35%,#48C838 65%,#20F020 100%);"></div><div style="position:absolute;left:99px;top:3px;width:6px;height:11px;border:1px solid #0A960A;border-radius:2px;box-sizing:border-box;background:linear-gradient(180deg,#F4FFD8 0%,#A8E890 35%,#48C838 65%,#20F020 100%);"></div><div style="position:absolute;left:107px;top:3px;width:6px;height:11px;border:1px solid #0A960A;border-radius:2px;box-sizing:border-box;background:linear-gradient(180deg,#F4FFD8 0%,#A8E890 35%,#48C838 65%,#20F020 100%);"></div><div style="position:absolute;left:115px;top:3px;width:6px;height:11px;border:1px solid #0A960A;border-radius:2px;box-sizing:border-box;background:linear-gradient(180deg,#F4FFD8 0%,#A8E890 35%,#48C838 65%,#20F020 100%);"></div><div style="position:absolute;left:123px;top:3px;width:6px;height:11px;border:1px solid #0A960A;border-radius:2px;box-sizing:border-box;background:linear-gradient(180deg,#F4FFD8 0%,#A8E890 35%,#48C838 65%,#20F020 100%);"></div><div style="position:absolute;left:131px;top:3px;width:6px;height:11px;border:1px solid #0A960A;border-radius:2px;box-sizing:border-box;background:linear-gradient(180deg,#F4FFD8 0%,#A8E890 35%,#48C838 65%,#20F020 100%);"></div><div style="position:absolute;left:139px;top:3px;width:6px;height:11px;border:1px solid #0A960A;border-radius:2px;box-sizing:border-box;background:linear-gradient(180deg,#F4FFD8 0%,#A8E890 35%,#48C838 65%,#20F020 100%);"></div><div style="position:absolute;left:147px;top:3px;width:6px;height:11px;border:1px solid #0A960A;border-radius:2px;box-sizing:border-box;background:linear-gradient(180deg,#F4FFD8 0%,#A8E890 35%,#48C838 65%,#20F020 100%);"></div><div style="position:absolute;left:155px;top:3px;width:6px;height:11px;border:1px solid #0A960A;border-radius:2px;box-sizing:border-box;background:linear-gradient(180deg,#F4FFD8 0%,#A8E890 35%,#48C838 65%,#20F020 100%);"></div><div style="position:absolute;left:163px;top:3px;width:6px;height:11px;border:1px solid #0A960A;border-radius:2px;box-sizing:border-box;background:linear-gradient(180deg,#F4FFD8 0%,#A8E890 35%,#48C838 65%,#20F020 100%);"></div><div style="position:absolute;left:171px;top:3px;width:6px;height:11px;border:1px solid #0A960A;border-radius:2px;box-sizing:border-box;background:linear-gradient(180deg,#F4FFD8 0%,#A8E890 35%,#48C838 65%,#20F020 100%);"></div><div style="position:absolute;left:179px;top:3px;width:6px;height:11px;border:1px solid #0A960A;border-radius:2px;box-sizing:border-box;background:linear-gradient(180deg,#F4FFD8 0%,#A8E890 35%,#48C838 65%,#20F020 100%);"></div><div style="position:absolute;left:187px;top:3px;width:6px;height:11px;border:1px solid #0A960A;border-radius:2px;box-sizing:border-box;background:linear-gradient(180deg,#F4FFD8 0%,#A8E890 35%,#48C838 65%,#20F020 100%);"></div><div style="position:absolute;left:195px;top:3px;width:6px;height:11px;border:1px solid #0A960A;border-radius:2px;box-sizing:border-box;background:linear-gradient(180deg,#F4FFD8 0%,#A8E890 35%,#48C838 65%,#20F020 100%);"></div><div style="position:absolute;left:203px;top:3px;width:6px;height:11px;border:1px solid #0A960A;border-radius:2px;box-sizing:border-box;background:linear-gradient(180deg,#F4FFD8 0%,#A8E890 35%,#48C838 65%,#20F020 100%);"></div><div style="position:absolute;left:211px;top:3px;width:6px;height:11px;border:1px solid #0A960A;border-radius:2px;box-sizing:border-box;background:linear-gradient(180deg,#F4FFD8 0%,#A8E890 35%,#48C838 65%,#20F020 100%);"></div><div style="position:absolute;left:219px;top:3px;width:6px;height:11px;border:1px solid #0A960A;border-radius:2px;box-sizing:border-box;background:linear-gradient(180deg,#F4FFD8 0%,#A8E890 35%,#48C838 65%,#20F020 100%);"></div><div style="position:absolute;left:227px;top:3px;width:6px;height:11px;border:1px solid #0A960A;border-radius:2px;box-sizing:border-box;background:linear-gradient(180deg,#F4FFD8 0%,#A8E890 35%,#48C838 65%,#20F020 100%);"></div><div style="position:absolute;left:235px;top:3px;width:6px;height:11px;border:1px solid #0A960A;border-radius:2px;box-sizing:border-box;background:linear-gradient(180deg,#F4FFD8 0%,#A8E890 35%,#48C838 65%,#20F020 100%);"></div><div style="position:absolute;left:243px;top:3px;width:6px;height:11px;border:1px solid #0A960A;border-radius:2px;box-sizing:border-box;background:linear-gradient(180deg,#F4FFD8 0%,#A8E890 35%,#48C838 65%,#20F020 100%);"></div><div style="position:absolute;left:251px;top:3px;width:6px;height:11px;border:1px solid #0A960A;border-radius:2px;box-sizing:border-box;background:linear-gradient(180deg,#F4FFD8 0%,#A8E890 35%,#48C838 65%,#20F020 100%);"></div><div style="position:absolute;left:259px;top:3px;width:6px;height:11px;border:1px solid #0A960A;border-radius:2px;box-sizing:border-box;background:linear-gradient(180deg,#F4FFD8 0%,#A8E890 35%,#48C838 65%,#20F020 100%);"></div><div style="position:absolute;left:267px;top:3px;width:6px;height:11px;border:1px solid #0A960A;border-radius:2px;box-sizing:border-box;background:linear-gradient(180deg,#F4FFD8 0%,#A8E890 35%,#48C838 65%,#20F020 100%);"></div><div style="position:absolute;left:275px;top:3px;width:6px;height:11px;border:1px solid #0A960A;border-radius:2px;box-sizing:border-box;background:linear-gradient(180deg,#F4FFD8 0%,#A8E890 35%,#48C838 65%,#20F020 100%);"></div><div style="position:absolute;left:283px;top:3px;width:6px;height:11px;border:1px solid #0A960A;border-radius:2px;box-sizing:border-box;background:linear-gradient(180deg,#F4FFD8 0%,#A8E890 35%,#48C838 65%,#20F020 100%);"></div><div style="position:absolute;left:291px;top:3px;width:6px;height:11px;border:1px solid #0A960A;border-radius:2px;box-sizing:border-box;background:linear-gradient(180deg,#F4FFD8 0%,#A8E890 35%,#48C838 65%,#20F020 100%);"></div><div style="position:absolute;left:299px;top:3px;width:6px;height:11px;border:1px solid #0A960A;border-radius:2px;box-sizing:border-box;background:linear-gradient(180deg,#F4FFD8 0%,#A8E890 35%,#48C838 65%,#20F020 100%);"></div><div style="position:absolute;left:307px;top:3px;width:6px;height:11px;border:1px solid #0A960A;border-radius:2px;box-sizing:border-box;background:linear-gradient(180deg,#F4FFD8 0%,#A8E890 35%,#48C838 65%,#20F020 100%);"></div><div style="position:absolute;left:315px;top:3px;width:6px;height:11px;border:1px solid #0A960A;border-radius:2px;box-sizing:border-box;background:linear-gradient(180deg,#F4FFD8 0%,#A8E890 35%,#48C838 65%,#20F020 100%);"></div><div style="position:absolute;left:323px;top:3px;width:6px;height:11px;border:1px solid #0A960A;border-radius:2px;box-sizing:border-box;background:linear-gradient(180deg,#F4FFD8 0%,#A8E890 35%,#48C838 65%,#20F020 100%);"></div><div style="position:absolute;left:331px;top:3px;width:6px;height:11px;border:1px solid #0A960A;border-radius:2px;box-sizing:border-box;background:linear-gradient(180deg,#F4FFD8 0%,#A8E890 35%,#48C838 65%,#20F020 100%);"></div><div style="position:absolute;left:339px;top:3px;width:6px;height:11px;border:1px solid #0A960A;border-radius:2px;box-sizing:border-box;background:linear-gradient(180deg,#F4FFD8 0%,#A8E890 35%,#48C838 65%,#20F020 100%);"></div><div style="position:absolute;left:347px;top:3px;width:6px;height:11px;border:1px solid #0A960A;border-radius:2px;box-sizing:border-box;background:linear-gradient(180deg,#F4FFD8 0%,#A8E890 35%,#48C838 65%,#20F020 100%);"></div><div style="position:absolute;left:355px;top:3px;width:6px;height:11px;border:1px solid #0A960A;border-radius:2px;box-sizing:border-box;background:linear-gradient(180deg,#F4FFD8 0%,#A8E890 35%,#48C838 65%,#20F020 100%);"></div><div style="position:absolute;left:363px;top:3px;width:6px;height:11px;border:1px solid #0A960A;border-radius:2px;box-sizing:border-box;background:linear-gradient(180deg,#F4FFD8 0%,#A8E890 35%,#48C838 65%,#20F020 100%);"></div><div style="position:absolute;left:371px;top:3px;width:6px;height:11px;border:1px solid #0A960A;border-radius:2px;box-sizing:border-box;background:linear-gradient(180deg,#F4FFD8 0%,#A8E890 35%,#48C838 65%,#20F020 100%);"></div><div style="position:absolute;left:379px;top:3px;width:6px;height:11px;border:1px solid #0A960A;border-radius:2px;box-sizing:border-box;background:linear-gradient(180deg,#F4FFD8 0%,#A8E890 35%,#48C838 65%,#20F020 100%);"></div><div style="position:absolute;left:387px;top:3px;width:6px;height:11px;border:1px solid #0A960A;border-radius:2px;box-sizing:border-box;background:linear-gradient(180deg,#F4FFD8 0%,#A8E890 35%,#48C838 65%,#20F020 100%);"></div><div style="position:absolute;left:395px;top:3px;width:6px;height:11px;border:1px solid #0A960A;border-radius:2px;box-sizing:border-box;background:linear-gradient(180deg,#F4FFD8 0%,#A8E890 35%,#48C838 65%,#20F020 100%);"></div><div style="position:absolute;left:403px;top:3px;width:6px;height:11px;border:1px solid #0A960A;border-radius:2px;box-sizing:border-box;background:linear-gradient(180deg,#F4FFD8 0%,#A8E890 35%,#48C838 65%,#20F020 100%);"></div><div style="position:absolute;left:411px;top:3px;width:6px;height:11px;border:1px solid #0A960A;border-radius:2px;box-sizing:border-box;background:linear-gradient(180deg,#F4FFD8 0%,#A8E890 35%,#48C838 65%,#20F020 100%);"></div><div style="position:absolute;left:419px;top:3px;width:6px;height:11px;border:1px solid #0A960A;border-radius:2px;box-sizing:border-box;background:linear-gradient(180deg,#F4FFD8 0%,#A8E890 35%,#48C838 65%,#20F020 100%);"></div><div style="position:absolute;left:427px;top:3px;width:6px;height:11px;border:1px solid #0A960A;border-radius:2px;box-sizing:border-box;background:linear-gradient(180deg,#F4FFD8 0%,#A8E890 35%,#48C838 65%,#20F020 100%);"></div><div style="position:absolute;left:435px;top:3px;width:6px;height:11px;border:1px solid #0A960A;border-radius:2px;box-sizing:border-box;background:linear-gradient(180deg,#F4FFD8 0%,#A8E890 35%,#48C838 65%,#20F020 100%);"></div><div style="position:absolute;left:443px;top:3px;width:6px;height:11px;border:1px solid #0A960A;border-radius:2px;box-sizing:border-box;background:linear-gradient(180deg,#F4FFD8 0%,#A8E890 35%,#48C838 65%,#20F020 100%);"></div><div style="position:absolute;left:451px;top:3px;width:6px;height:11px;border:1px solid #0A960A;border-radius:2px;box-sizing:border-box;background:linear-gradient(180deg,#F4FFD8 0%,#A8E890 35%,#48C838 65%,#20F020 100%);"></div><div style="position:absolute;left:459px;top:3px;width:6px;height:11px;border:1px solid #0A960A;border-radius:2px;box-sizing:border-box;background:linear-gradient(180deg,#F4FFD8 0%,#A8E890 35%,#48C838 65%,#20F020 100%);"></div><div style="position:absolute;left:467px;top:3px;width:6px;height:11px;border:1px solid #0A960A;border-radius:2px;box-sizing:border-box;background:linear-gradient(180deg,#F4FFD8 0%,#A8E890 35%,#48C838 65%,#20F020 100%);"></div><div style="position:absolute;left:475px;top:3px;width:6px;height:11px;border:1px solid #0A960A;border-radius:2px;box-sizing:border-box;background:linear-gradient(180deg,#F4FFD8 0%,#A8E890 35%,#48C838 65%,#20F020 100%);"></div><div style="position:absolute;left:483px;top:3px;width:6px;height:11px;border:1px solid #0A960A;border-radius:2px;box-sizing:border-box;background:linear-gradient(180deg,#F4FFD8 0%,#A8E890 35%,#48C838 65%,#20F020 100%);"></div><div style="position:absolute;left:491px;top:3px;width:6px;height:11px;border:1px solid #0A960A;border-radius:2px;box-sizing:border-box;background:linear-gradient(180deg,#F4FFD8 0%,#A8E890 35%,#48C838 65%,#20F020 100%);"></div><div style="position:absolute;left:499px;top:3px;width:6px;height:11px;border:1px solid #0A960A;border-radius:2px;box-sizing:border-box;background:linear-gradient(180deg,#F4FFD8 0%,#A8E890 35%,#48C838 65%,#20F020 100%);"></div><div style="position:absolute;left:507px;top:3px;width:6px;height:11px;border:1px solid #0A960A;border-radius:2px;box-sizing:border-box;background:linear-gradient(180deg,#F4FFD8 0%,#A8E890 35%,#48C838 65%,#20F020 100%);"></div><div style="position:absolute;left:515px;top:3px;width:6px;height:11px;border:1px solid #0A960A;border-radius:2px;box-sizing:border-box;background:linear-gradient(180deg,#F4FFD8 0%,#A8E890 35%,#48C838 65%,#20F020 100%);"></div><div style="position:absolute;left:523px;top:3px;width:6px;height:11px;border:1px solid #0A960A;border-radius:2px;box-sizing:border-box;background:linear-gradient(180deg,#F4FFD8 0%,#A8E890 35%,#48C838 65%,#20F020 100%);"></div><div style="position:absolute;left:531px;top:3px;width:6px;height:11px;border:1px solid #0A960A;border-radius:2px;box-sizing:border-box;background:linear-gradient(180deg,#F4FFD8 0%,#A8E890 35%,#48C838 65%,#20F020 100%);"></div><div style="position:absolute;left:539px;top:3px;width:6px;height:11px;border:1px solid #0A960A;border-radius:2px;box-sizing:border-box;background:linear-gradient(180deg,#F4FFD8 0%,#A8E890 35%,#48C838 65%,#20F020 100%);"></div><div style="position:absolute;left:547px;top:3px;width:6px;height:11px;border:1px solid #0A960A;border-radius:2px;box-sizing:border-box;background:linear-gradient(180deg,#F4FFD8 0%,#A8E890 35%,#48C838 65%,#20F020 100%);"></div><div style="position:absolute;left:555px;top:3px;width:6px;height:11px;border:1px solid #0A960A;border-radius:2px;box-sizing:border-box;background:linear-gradient(180deg,#F4FFD8 0%,#A8E890 35%,#48C838 65%,#20F020 100%);"></div><div style="position:absolute;left:563px;top:3px;width:6px;height:11px;border:1px solid #0A960A;border-radius:2px;box-sizing:border-box;background:linear-gradient(180deg,#F4FFD8 0%,#A8E890 35%,#48C838 65%,#20F020 100%);"></div><div style="position:absolute;left:571px;top:3px;width:6px;height:11px;border:1px solid #0A960A;border-radius:2px;box-sizing:border-box;background:linear-gradient(180deg,#F4FFD8 0%,#A8E890 35%,#48C838 65%,#20F020 100%);"></div><div style="position:absolute;left:579px;top:3px;width:6px;height:11px;border:1px solid #0A960A;border-radius:2px;box-sizing:border-box;background:linear-gradient(180deg,#F4FFD8 0%,#A8E890 35%,#48C838 65%,#20F020 100%);"></div><div style="position:absolute;left:587px;top:3px;width:6px;height:11px;border:1px solid #0A960A;border-radius:2px;box-sizing:border-box;background:linear-gradient(180deg,#F4FFD8 0%,#A8E890 35%,#48C838 65%,#20F020 100%);"></div><div style="position:absolute;left:595px;top:3px;width:6px;height:11px;border:1px solid #0A960A;border-radius:2px;box-sizing:border-box;background:linear-gradient(180deg,#F4FFD8 0%,#A8E890 35%,#48C838 65%,#20F020 100%);"></div><div style="position:absolute;left:603px;top:3px;width:6px;height:11px;border:1px solid #0A960A;border-radius:2px;box-sizing:border-box;background:linear-gradient(180deg,#F4FFD8 0%,#A8E890 35%,#48C838 65%,#20F020 100%);"></div><div style="position:absolute;left:611px;top:3px;width:6px;height:11px;border:1px solid #0A960A;border-radius:2px;box-sizing:border-box;background:linear-gradient(180deg,#F4FFD8 0%,#A8E890 35%,#48C838 65%,#20F020 100%);"></div><div style="position:absolute;left:619px;top:3px;width:6px;height:11px;border:1px solid #0A960A;border-radius:2px;box-sizing:border-box;background:linear-gradient(180deg,#F4FFD8 0%,#A8E890 35%,#48C838 65%,#20F020 100%);"></div><div style="position:absolute;left:627px;top:3px;width:6px;height:11px;border:1px solid #0A960A;border-radius:2px;box-sizing:border-box;background:linear-gradient(180deg,#F4FFD8 0%,#A8E890 35%,#48C838 65%,#20F020 100%);"></div><div style="position:absolute;left:635px;top:3px;width:6px;height:11px;border:1px solid #0A960A;border-radius:2px;box-sizing:border-box;background:linear-gradient(180deg,#F4FFD8 0%,#A8E890 35%,#48C838 65%,#20F020 100%);"></div><div style="position:absolute;left:643px;top:3px;width:6px;height:11px;border:1px solid #0A960A;border-radius:2px;box-sizing:border-box;background:linear-gradient(180deg,#F4FFD8 0%,#A8E890 35%,#48C838 65%,#20F020 100%);"></div><div style="position:absolute;left:651px;top:3px;width:6px;height:11px;border:1px solid #0A960A;border-radius:2px;box-sizing:border-box;background:linear-gradient(180deg,#F4FFD8 0%,#A8E890 35%,#48C838 65%,#20F020 100%);"></div><div style="position:absolute;left:659px;top:3px;width:6px;height:11px;border:1px solid #0A960A;border-radius:2px;box-sizing:border-box;background:linear-gradient(180deg,#F4FFD8 0%,#A8E890 35%,#48C838 65%,#20F020 100%);"></div><div style="position:absolute;left:667px;top:3px;width:6px;height:11px;border:1px solid #0A960A;border-radius:2px;box-sizing:border-box;background:linear-gradient(180deg,#F4FFD8 0%,#A8E890 35%,#48C838 65%,#20F020 100%);"></div><div style="position:absolute;left:675px;top:3px;width:6px;height:11px;border:1px solid #0A960A;border-radius:2px;box-sizing:border-box;background:linear-gradient(180deg,#F4FFD8 0%,#A8E890 35%,#48C838 65%,#20F020 100%);"></div><div style="position:absolute;left:683px;top:3px;width:6px;height:11px;border:1px solid #0A960A;border-radius:2px;box-sizing:border-box;background:linear-gradient(180deg,#F4FFD8 0%,#A8E890 35%,#48C838 65%,#20F020 100%);"></div><div style="position:absolute;left:691px;top:3px;width:6px;height:11px;border:1px solid #0A960A;border-radius:2px;box-sizing:border-box;background:linear-gradient(180deg,#F4FFD8 0%,#A8E890 35%,#48C838 65%,#20F020 100%);"></div><div style="position:absolute;left:699px;top:3px;width:6px;height:11px;border:1px solid #0A960A;border-radius:2px;box-sizing:border-box;background:linear-gradient(180deg,#F4FFD8 0%,#A8E890 35%,#48C838 65%,#20F020 100%);"></div><div style="position:absolute;left:707px;top:3px;width:6px;height:11px;border:1px solid #0A960A;border-radius:2px;box-sizing:border-box;background:linear-gradient(180deg,#F4FFD8 0%,#A8E890 35%,#48C838 65%,#20F020 100%);"></div><div style="position:absolute;left:715px;top:3px;width:6px;height:11px;border:1px solid #0A960A;border-radius:2px;box-sizing:border-box;background:linear-gradient(180deg,#F4FFD8 0%,#A8E890 35%,#48C838 65%,#20F020 100%);"></div><div style="position:absolute;left:723px;top:3px;width:6px;height:11px;border:1px solid #0A960A;border-radius:2px;box-sizing:border-box;background:linear-gradient(180deg,#F4FFD8 0%,#A8E890 35%,#48C838 65%,#20F020 100%);"></div><div style="position:absolute;left:731px;top:3px;width:6px;height:11px;border:1px solid #0A960A;border-radius:2px;box-sizing:border-box;background:linear-gradient(180deg,#F4FFD8 0%,#A8E890 35%,#48C838 65%,#20F020 100%);"></div><div style="position:absolute;left:739px;top:3px;width:6px;height:11px;border:1px solid #0A960A;border-radius:2px;box-sizing:border-box;background:linear-gradient(180deg,#F4FFD8 0%,#A8E890 35%,#48C838 65%,#20F020 100%);"></div><div style="position:absolute;left:747px;top:3px;width:6px;height:11px;border:1px solid #0A960A;border-radius:2px;box-sizing:border-box;background:linear-gradient(180deg,#F4FFD8 0%,#A8E890 35%,#48C838 65%,#20F020 100%);"></div><div style="position:absolute;left:755px;top:3px;width:6px;height:11px;border:1px solid #0A960A;border-radius:2px;box-sizing:border-box;background:linear-gradient(180deg,#F4FFD8 0%,#A8E890 35%,#48C838 65%,#20F020 100%);"></div><div style="position:absolute;left:763px;top:3px;width:6px;height:11px;border:1px solid #0A960A;border-radius:2px;box-sizing:border-box;background:linear-gradient(180deg,#F4FFD8 0%,#A8E890 35%,#48C838 65%,#20F020 100%);"></div><div style="position:absolute;left:771px;top:3px;width:6px;height:11px;border:1px solid #0A960A;border-radius:2px;box-sizing:border-box;background:linear-gradient(180deg,#F4FFD8 0%,#A8E890 35%,#48C838 65%,#20F020 100%);"></div><div style="position:absolute;left:779px;top:3px;width:6px;height:11px;border:1px solid #0A960A;border-radius:2px;box-sizing:border-box;background:linear-gradient(180deg,#F4FFD8 0%,#A8E890 35%,#48C838 65%,#20F020 100%);"></div><div style="position:absolute;left:787px;top:3px;width:6px;height:11px;border:1px solid #0A960A;border-radius:2px;box-sizing:border-box;background:linear-gradient(180deg,#F4FFD8 0%,#A8E890 35%,#48C838 65%,#20F020 100%);"></div><div style="position:absolute;left:795px;top:3px;width:6px;height:11px;border:1px solid #0A960A;border-radius:2px;box-sizing:border-box;background:linear-gradient(180deg,#F4FFD8 0%,#A8E890 35%,#48C838 65%,#20F020 100%);"></div><div style="position:absolute;left:803px;top:3px;width:6px;height:11px;border:1px solid #0A960A;border-radius:2px;box-sizing:border-box;background:linear-gradient(180deg,#F4FFD8 0%,#A8E890 35%,#48C838 65%,#20F020 100%);"></div><div style="position:absolute;left:811px;top:3px;width:6px;height:11px;border:1px solid #0A960A;border-radius:2px;box-sizing:border-box;background:linear-gradient(180deg,#F4FFD8 0%,#A8E890 35%,#48C838 65%,#20F020 100%);"></div><div style="position:absolute;left:819px;top:3px;width:6px;height:11px;border:1px solid #0A960A;border-radius:2px;box-sizing:border-box;background:linear-gradient(180deg,#F4FFD8 0%,#A8E890 35%,#48C838 65%,#20F020 100%);"></div><div style="position:absolute;left:827px;top:3px;width:6px;height:11px;border:1px solid #0A960A;border-radius:2px;box-sizing:border-box;background:linear-gradient(180deg,#F4FFD8 0%,#A8E890 35%,#48C838 65%,#20F020 100%);"></div><div style="position:absolute;left:835px;top:3px;width:6px;height:11px;border:1px solid #0A960A;border-radius:2px;box-sizing:border-box;background:linear-gradient(180deg,#F4FFD8 0%,#A8E890 35%,#48C838 65%,#20F020 100%);"></div></div>
<div style="position:absolute;left:16px;top:602px;font-size:11px;line-height:13px;font-weight:400;color:#000;letter-spacing:-0.1px;white-space:pre;">100 %</div>
<div style="position:absolute;left:88px;top:602px;font-size:11px;line-height:13px;font-weight:400;color:#000;letter-spacing:-0.1px;white-space:pre;">20 records</div>
<div style="position:absolute;left:150px;top:602px;font-size:11px;line-height:13px;font-weight:400;color:#000;letter-spacing:-0.2px;white-space:pre;">Elapsed: 00:00:01</div></body></html>
